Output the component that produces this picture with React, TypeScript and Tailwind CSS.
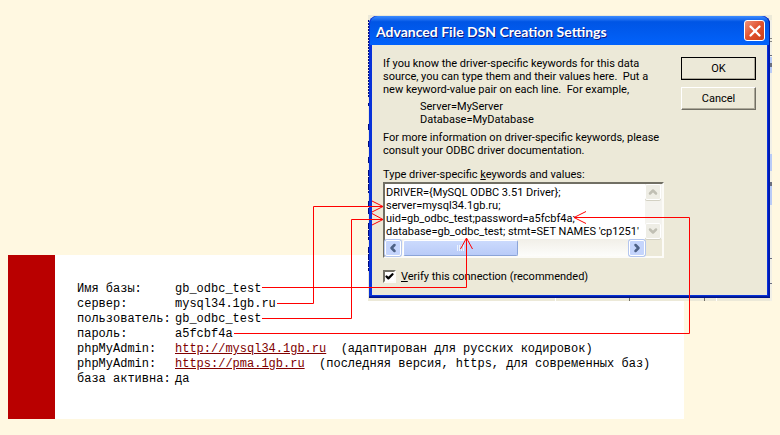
import { Check, ChevronDown, ChevronLeft, ChevronRight, ChevronUp, X } from "lucide-react";

const KEYWORDS = [
  "DRIVER={MySQL ODBC 3.51 Driver};",
  "server=mysql34.1gb.ru;",
  "uid=gb_odbc_test;password=a5fcbf4a;",
  "database=gb_odbc_test; stmt=SET NAMES 'cp1251'",
].join("\n");

const rows = [
  { label: "Имя базы:", value: "gb_odbc_test" },
  { label: "сервер:", value: "mysql34.1gb.ru" },
  { label: "пользователь:", value: "gb_odbc_test" },
  { label: "пароль:", value: "a5fcbf4a" },
  { label: "phpMyAdmin:", href: "http://mysql34.1gb.ru", note: "(адаптирован для русских кодировок)" },
  { label: "phpMyAdmin:", href: "https://pma.1gb.ru", note: "(последняя версия, https, для современных баз)" },
  { label: "база активна:", value: "да" },
];

function AccountPanel() {
  return (
    <div className="mr-24 ml-2 flex bg-white">
      <div className="w-[47px] shrink-0 bg-[#b90000]" />
      <dl className="px-[22px] pt-[27px] pb-8 font-['Liberation_Mono',monospace] text-[12px] leading-[15px] whitespace-pre text-black">
        {rows.map((row, i) => (
          <div key={i} className="flex">
            <dt className="w-[98px] shrink-0">{row.label}</dt>
            <dd>
              {row.href ? (
                <>
                  <a href={row.href} className="text-[#800000] underline">
                    {row.href}
                  </a>
                  {"  " + row.note}
                </>
              ) : (
                row.value
              )}
            </dd>
          </div>
        ))}
      </dl>
    </div>
  );
}

const scrollButton = "flex size-4 shrink-0 items-center justify-center rounded-xs border border-white";

function KeywordsBox() {
  return (
    <div className="mt-px grid w-[281px] grid-cols-[1fr_17px] grid-rows-[55px_17px] border-2 border-t-[#716f64] border-r-[#fcfbf7] border-b-[#fcfbf7] border-l-[#716f64] bg-[#ece9d8]">
      <textarea
        id="keywords"
        wrap="off"
        readOnly
        defaultValue={KEYWORDS}
        className="resize-none overflow-hidden bg-white pt-0.5 pl-px whitespace-pre outline-none"
      />
      <div className="flex flex-col justify-between bg-[#f4f3ee]">
        <button aria-label="Scroll up" className={`${scrollButton} bg-[#eeede5] text-[#c0bfb4] shadow-[0_1px_0_#d3d1c3]`}>
          <ChevronUp size={12} strokeWidth={5} />
        </button>
        <button aria-label="Scroll down" className={`${scrollButton} bg-[#eeede5] text-[#c0bfb4] shadow-[0_1px_0_#d3d1c3]`}>
          <ChevronDown size={12} strokeWidth={5} />
        </button>
      </div>
      <div className="flex items-center bg-linear-to-b from-[#f1efe8] to-[#fdfdfb]">
        <button aria-label="Scroll left" className={`${scrollButton} bg-[#c5d5fc] text-[#4d6185] shadow-[0_0_0_1px_#b4c6ee]`}>
          <ChevronLeft size={12} strokeWidth={5} />
        </button>
        <div className="ml-0.5 flex h-4 w-[115px] items-center justify-center gap-px rounded-xs border border-r-[#8ba4d8] border-b-[#8ba4d8] border-white bg-linear-to-b from-[#cbdafd] to-[#b9cbf8]">
          <span className="h-1.5 w-px bg-[#eef4fe]" />
          <span className="h-1.5 w-px bg-[#eef4fe]" />
          <span className="h-1.5 w-px bg-[#eef4fe]" />
          <span className="h-1.5 w-px bg-[#eef4fe]" />
        </div>
        <button aria-label="Scroll right" className={`${scrollButton} ml-auto bg-[#c5d5fc] text-[#4d6185] shadow-[0_0_0_1px_#b4c6ee]`}>
          <ChevronRight size={12} strokeWidth={5} />
        </button>
      </div>
    </div>
  );
}

// slivers of the window behind that show around the dialog
function BackWindowEdges() {
  return (
    <svg className="absolute inset-0 size-full" aria-hidden="true">
      <path d="M.5 5V82" stroke="#000a80" strokeDasharray="2 1" />
      <path d="M.5 88V91M.5 109V116M.5 126V132M.5 142V148M.5 155V178M.5 186V200M.5 208V225M.5 232V256" stroke="#000a80" strokeDasharray="6 1" />
      <path d="M403 5V286" stroke="#f1efe6" strokeWidth="2" />
      <path d="M403 42V58M403 139V156M403 170V190" stroke="#b9cbf8" strokeWidth="2" />
      <path d="M403 23V24M403 26V27" stroke="#222" strokeWidth="1" />
      <path d="M403 40V41M403 48V52M403 167V171M403 243V244M403 268V269" stroke="#6b6f80" strokeWidth="2" />
      <path d="M187.5 283V286M348.5 283V286" stroke="#fff" />
      <path d="M261.5 283V286M336.5 283V286" stroke="#716f64" />
    </svg>
  );
}

const bevel =
  "h-[23px] w-[75px] border border-t-white border-r-[#716f64] border-b-[#716f64] border-l-white shadow-[inset_-1px_-1px_0_#aca899]";

function DsnDialog() {
  return (
    <div className="absolute top-[15px] left-[368px] bg-[#ece9d8] pt-px pr-0.5 pb-[3px] pl-px">
      <BackWindowEdges />
      <div className="relative w-[401px] rounded-t-lg border-b border-[#00138c] bg-[#0831d9] pb-0.5 shadow-[inset_-1px_-1px_0_#001ea0,inset_-2px_0_0_#0019c0,inset_2px_0_0_#0831d9]">
        <div className="mx-px flex h-[29px] items-center justify-between rounded-t-lg bg-linear-to-b from-[#3c8cff] via-[#0055e5] via-20% to-[#0262fb] pr-1 pl-1.5">
          <h1 className="pt-0.5 font-['Lato',sans-serif] text-[14px] font-bold text-white [text-shadow:1px_1px_0_#0a1883]">
            Advanced File DSN Creation Settings
          </h1>
          <button
            aria-label="Close"
            className="flex size-[21px] items-center justify-center rounded-[3px] border border-white bg-linear-to-br from-[#ee9078] via-[#e0502c] to-[#cc3f18] text-white"
          >
            <X size={18} strokeWidth={3} className="shrink-0" />
          </button>
        </div>
        <div className="mx-[3px] flex justify-between bg-[#ece9d8] px-[11px] py-3 font-['Roboto',sans-serif] text-[11px] leading-[13px] text-black">
          <div className="whitespace-pre">
            <p>
              If you know the driver-specific keywords for this data{"\n"}
              source, you can type them and their values here.{"  "}Put a{"\n"}
              new keyword-value pair on each line.{"  "}For example,
            </p>
            <p className="mt-1 ml-[37px]">
              Server=MyServer{"\n"}
              Database=MyDatabase
            </p>
            <p className="mt-[5px]">
              For more information on driver-specific keywords, please{"\n"}
              consult your ODBC driver documentation.
            </p>
            <label htmlFor="keywords" className="mt-[11px] block">
              Type driver-specific <u>k</u>eywords and values:
            </label>
            <KeywordsBox />
            <label className="mt-3 flex items-center">
              <span className="relative flex size-[13px]">
                <input
                  type="checkbox"
                  defaultChecked
                  className="peer size-[13px] appearance-none border-2 border-t-[#716f64] border-r-[#fcfbf7] border-b-[#fcfbf7] border-l-[#716f64] bg-white"
                />
                <Check size={9} strokeWidth={6} className="absolute top-0.5 left-0.5 hidden peer-checked:block" />
              </span>
              <span className="ml-[5px]">
                <u>V</u>erify this connection (recommended)
              </span>
            </label>
          </div>
          <div className="flex flex-col gap-[7px]">
            <button className={`${bevel} outline outline-black -outline-offset-1`}>OK</button>
            <button className={bevel}>Cancel</button>
          </div>
        </div>
      </div>
    </div>
  );
}

// red arrows from each account value to its place in the keywords box
function Arrows() {
  return (
    <svg className="pointer-events-none absolute top-0 left-0 h-[435px] w-[780px]" fill="none" stroke="#f00">
      <path d="M262 287.5H466.5V238M460.5 249L466.5 238L472.5 249" />
      <path d="M277 303.5H313.5V206.5H383M372 201L383 206.5L372 212" />
      <path d="M262 318.5H351.5V219.5H383M372 213.5L383 219.5L372 225" />
      <path d="M234 333.5H689.5V217.5H574M586 211.5L574 217.5L586 223.5" />
    </svg>
  );
}

export default function App() {
  return (
    <main className="relative min-h-screen bg-[#fff8e1] pt-[255px] pb-4">
      <AccountPanel />
      <DsnDialog />
      <Arrows />
    </main>
  );
}
